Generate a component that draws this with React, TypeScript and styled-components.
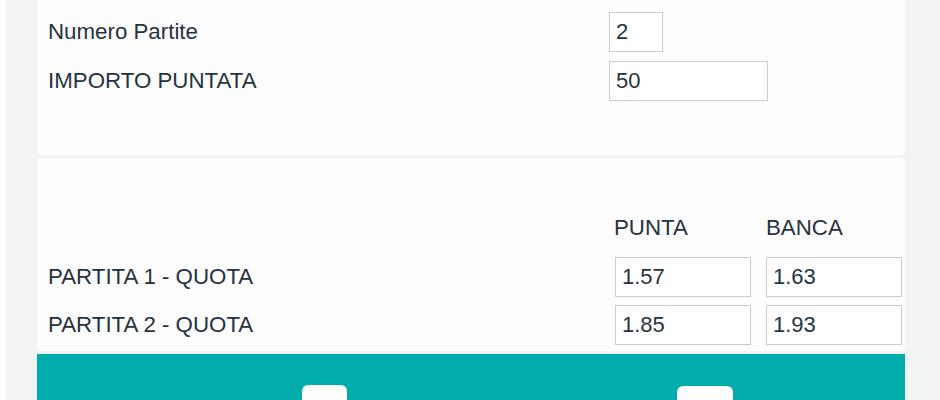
import React from 'react';
import styled, { createGlobalStyle } from 'styled-components';

const GlobalStyle = createGlobalStyle`
  html, body {
    margin: 0;
    padding: 0;
    background: #fdfdfd;
    height: 400px;
    overflow: hidden;
  }
  body {
    font-family: "Liberation Sans", Arial, Helvetica, sans-serif;
    color: #26333f;
  }
`;

const Page = styled.div`
  margin-left: 6px;
  background-color: #f2f3f3;
  padding: 0 35px 0 31px;
  height: 400px;
  display: flex;
  flex-direction: column;
  gap: 3px;
`;

const Card = styled.div<{ $top: number; $bottom: number; $roundTop?: boolean }>`
  background-color: #fdfdfd;
  border-radius: ${(p) => (p.$roundTop ? '4px' : '0 0 4px 4px')};
  padding: ${(p) => p.$top}px 3px ${(p) => p.$bottom}px 11px;
  display: flex;
  flex-direction: column;
`;

const FormGrid = styled.div<{ $rowGap: number }>`
  display: grid;
  grid-template-columns: 561px 1fr;
  row-gap: ${(p) => p.$rowGap}px;
  align-items: center;
`;

const OddsGrid = styled.div`
  display: grid;
  grid-template-columns: 552px 136px 136px;
  column-gap: 15px;
  row-gap: 8px;
  align-items: center;
`;

const Label = styled.div`
  font-size: 22.3px;
  line-height: 24px;
  white-space: nowrap;
`;

const ColumnHead = styled.div<{ $shift?: number }>`
  font-size: 22.3px;
  line-height: 24px;
  margin-left: ${(p) => p.$shift || 0}px;
  margin-bottom: 9px;
`;

const Field = styled.input<{ $width: number }>`
  box-sizing: border-box;
  width: ${(p) => p.$width}px;
  height: 40px;
  border: 1px solid #cccccc;
  border-radius: 0;
  background: #ffffff;
  padding: 0 6px;
  margin: 0;
  font-family: "Liberation Sans", Arial, Helvetica, sans-serif;
  font-size: 22px;
  color: #26333f;
  outline: none;
`;

const ActionBand = styled.div`
  background-color: #00adad;
  flex: 1;
  display: flex;
  align-items: flex-start;
  padding: 31px 0 0 265px;
  overflow: hidden;
`;

const NavButton = styled.div<{ $width: number; $dy?: number }>`
  width: ${(p) => p.$width}px;
  height: 44px;
  margin-top: ${(p) => p.$dy || 0}px;
  background-color: #ffffff;
  border-radius: 6px;
  flex-shrink: 0;
`;

const BandSpacer = styled.div`
  width: 330px;
  flex-shrink: 0;
`;

export default function App(): React.ReactElement {
  return (
    <>
      <GlobalStyle />
      <Page>
        <Card $top={12} $bottom={54}>
          <FormGrid $rowGap={9}>
            <Label>Numero Partite</Label>
            <Field $width={54} defaultValue='2' />
            <Label>IMPORTO PUNTATA</Label>
            <Field $width={159} defaultValue='50' />
          </FormGrid>
        </Card>
        <Card $top={58} $bottom={6} $roundTop={true}>
          <OddsGrid>
            <div />
            <ColumnHead $shift={-1}>PUNTA</ColumnHead>
            <ColumnHead>BANCA</ColumnHead>
            <Label>PARTITA 1 - QUOTA</Label>
            <Field $width={136} defaultValue='1.57' />
            <Field $width={136} defaultValue='1.63' />
            <Label>PARTITA 2 - QUOTA</Label>
            <Field $width={136} defaultValue='1.85' />
            <Field $width={136} defaultValue='1.93' />
          </OddsGrid>
        </Card>
        <ActionBand>
          <NavButton $width={45} />
          <BandSpacer />
          <NavButton $width={56} $dy={1} />
        </ActionBand>
      </Page>
    </>
  );
}
